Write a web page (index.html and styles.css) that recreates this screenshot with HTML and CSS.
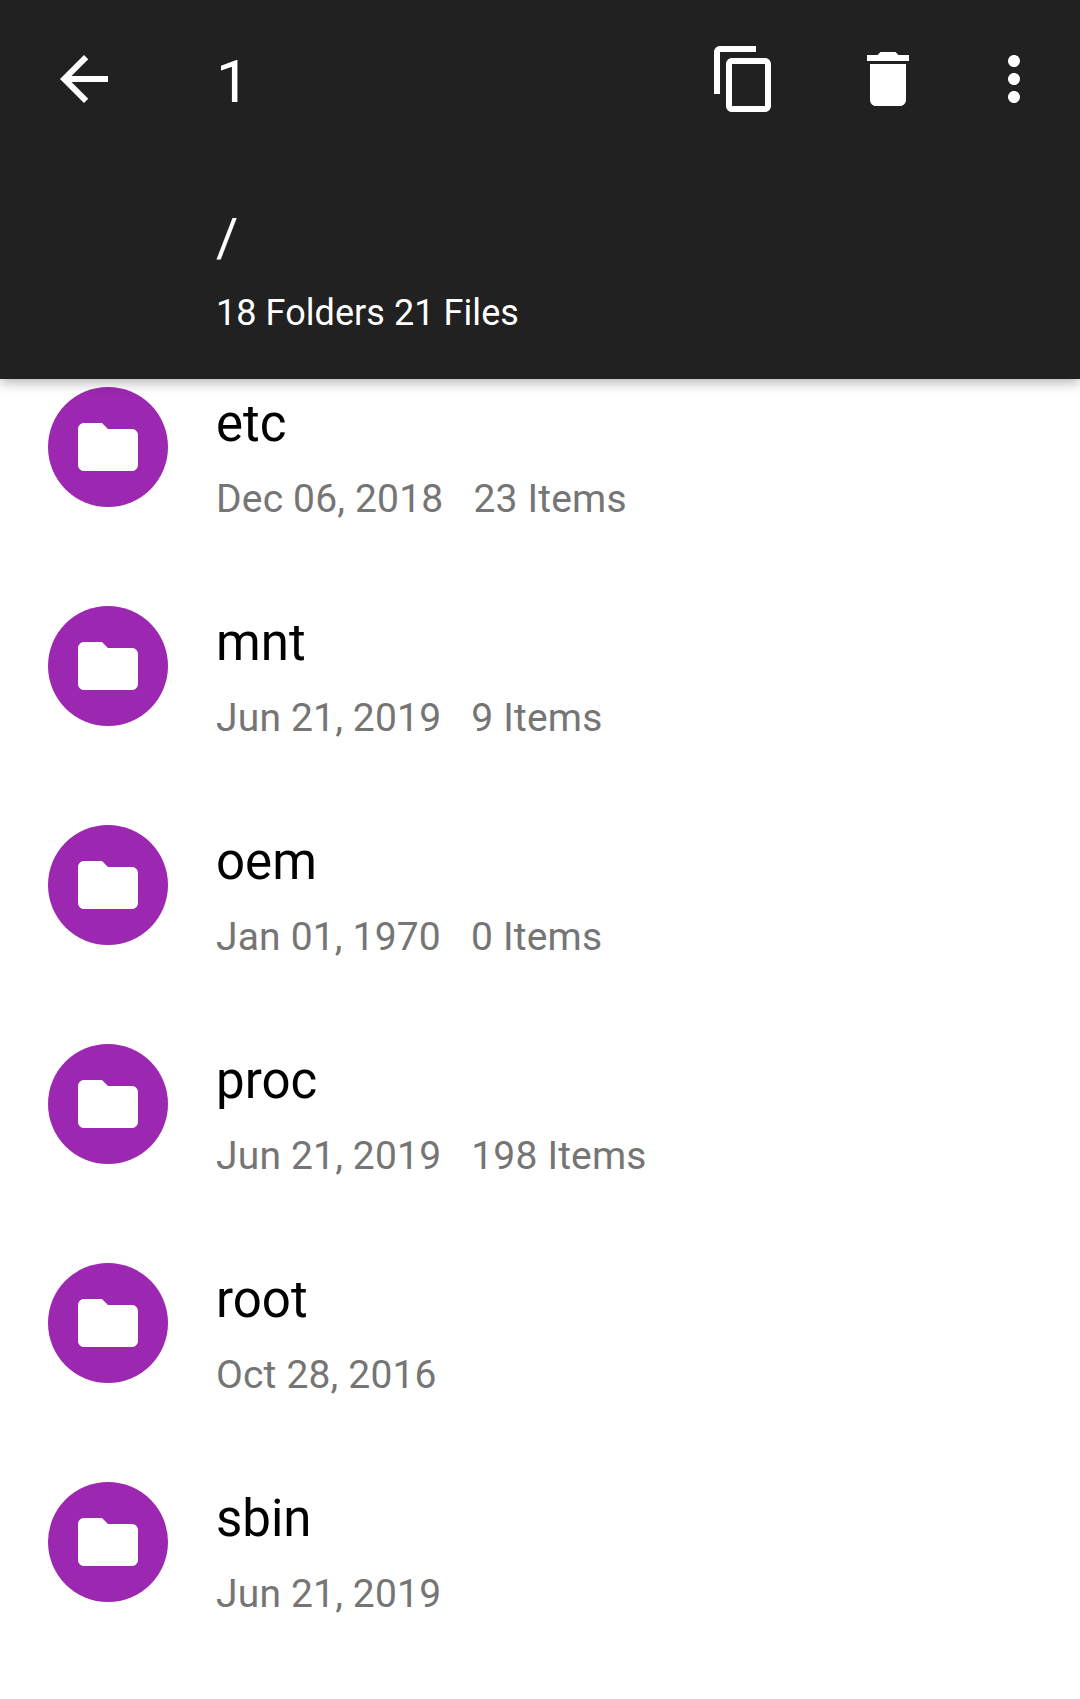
FILE: index.html
```html
<!DOCTYPE html>
<html lang="en">
<head>
<meta charset="utf-8">
<title>Files</title>
<link rel="stylesheet" href="styles.css">
</head>
<body>
<svg class="defs"><symbol id="folder" viewBox="0 0 24 24"><path d="M10 4H4c-1.100 0-1.990.9-1.990 2L2 18c0 1.100.9 2 2 2h16c1.100 0 2-.9 2-2V8c0-1.100-.9-2-2-2h-8l-2-2z"/></symbol></svg>
<header class="header">
  <div class="toolbar">
    <svg class="icon back" viewBox="0 0 24 24"><path d="M20 11H7.830l5.590-5.590L12 4l-8 8 8 8 1.410-1.410L7.830 13H20v-2z"/></svg>
    <h1 class="count">1</h1>
    <svg class="icon copy" viewBox="0 0 24 24"><path d="M16 1H4c-1.100 0-2 .9-2 2v14h2V3h12V1zm3 4H8c-1.100 0-2 .9-2 2v14c0 1.100.9 2 2 2h11c1.100 0 2-.9 2-2V7c0-1.100-.9-2-2-2zm0 16H8V7h11v14z"/></svg>
    <svg class="icon trash" viewBox="0 0 24 24"><path d="M6 19c0 1.100.9 2 2 2h8c1.100 0 2-.9 2-2V7H6v12zM19 4h-3.500l-1-1h-5l-1 1H5v2h14V4z"/></svg>
    <svg class="icon more" viewBox="0 0 24 24"><path d="M12 8c1.100 0 2-.9 2-2s-.9-2-2-2-2 .9-2 2 .9 2 2 2zm0 2c-1.100 0-2 .9-2 2s.9 2 2 2 2-.9 2-2-.9-2-2-2zm0 6c-1.100 0-2 .9-2 2s.9 2 2 2 2-.9 2-2-.9-2-2-2z"/></svg>
  </div>
  <div class="path">/</div>
  <div class="summary">18 Folders 21 Files</div>
</header>
<main class="list">
  <div class="row"><span class="avatar"><svg><use href="#folder"/></svg></span><div class="info"><div class="name">etc</div><div class="meta"><span>Dec 06, 2018</span><span>23 Items</span></div></div></div>
  <div class="row"><span class="avatar"><svg><use href="#folder"/></svg></span><div class="info"><div class="name">mnt</div><div class="meta"><span>Jun 21, 2019</span><span>9 Items</span></div></div></div>
  <div class="row"><span class="avatar"><svg><use href="#folder"/></svg></span><div class="info"><div class="name">oem</div><div class="meta"><span>Jan 01, 1970</span><span>0 Items</span></div></div></div>
  <div class="row"><span class="avatar"><svg><use href="#folder"/></svg></span><div class="info"><div class="name">proc</div><div class="meta"><span>Jun 21, 2019</span><span>198 Items</span></div></div></div>
  <div class="row"><span class="avatar"><svg><use href="#folder"/></svg></span><div class="info"><div class="name">root</div><div class="meta"><span>Oct 28, 2016</span></div></div></div>
  <div class="row"><span class="avatar"><svg><use href="#folder"/></svg></span><div class="info"><div class="name">sbin</div><div class="meta"><span>Jun 21, 2019</span></div></div></div>
</main>
</body>
</html>
```
FILE: styles.css
```css
* { box-sizing: border-box; }
body { margin: 0; background: #fff; font-family: Roboto, sans-serif; height: 1699px; overflow: hidden; }
.defs { display: none; }
.header { height: 379px; background: #212121; color: #fff; position: relative; box-shadow: 0 3px 12px rgba(0,0,0,.32); }
.toolbar { height: 158px; display: flex; align-items: center; padding-left: 48px; }
.icon { width: 72px; height: 72px; fill: #fff; flex: none; }
.count { margin: 6px auto 0 96px; font-size: 60px; font-weight: 400; line-height: 70px; }
.copy { margin-right: 72px; }
.trash { margin-right: 54px; }
.more { margin-right: 30px; }
.path { margin: 45px 0 0 216px; font-size: 54px; line-height: 70px; }
.summary { margin: 16px 0 0 216px; font-size: 36px; line-height: 48px; letter-spacing: .06px; }
.list { padding-top: 8px; }
.row { height: 219px; display: flex; padding-left: 48px; }
.avatar { width: 120px; height: 120px; border-radius: 50%; background: #9c27b0; display: flex; align-items: center; justify-content: center; flex: none; }
.avatar svg { width: 72px; height: 72px; fill: #fff; }
.info { margin-left: 48px; }
.name { font-size: 51px; line-height: 60px; margin-top: 7px; color: #000; }
.meta { font-size: 39px; line-height: 46px; margin-top: 22px; color: #757575; display: flex; gap: 30px; letter-spacing: .18px; }
```
